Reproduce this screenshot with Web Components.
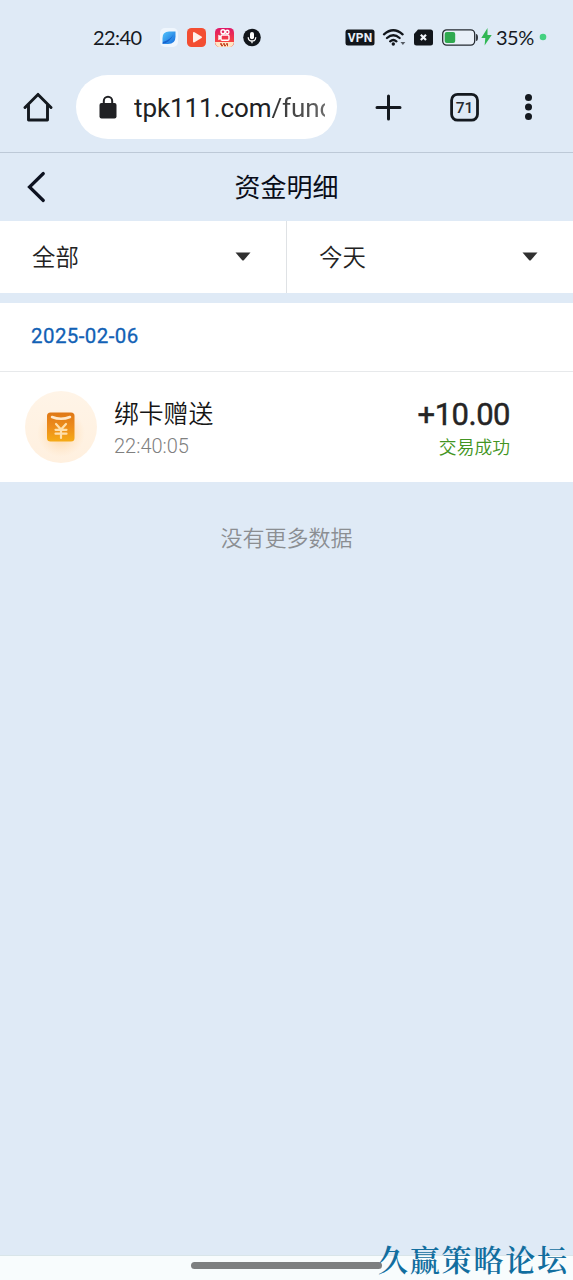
<!DOCTYPE html>
<html lang="zh-CN">
<head>
<meta charset="utf-8">
<title>资金明细</title>
<style>
html,body{margin:0;height:100%}
body{background:#dfeaf6;font-family:Roboto,"Noto Sans CJK SC",sans-serif;overflow:hidden}
</style>
</head>
<body>
<funds-app></funds-app>
<script>
const define=(name,html)=>customElements.define(name,class extends HTMLElement{
  constructor(){
    super();
    const t=document.createElement('template');
    t.innerHTML=html;
    this.attachShadow({mode:'open'}).append(t.content.cloneNode(true));
  }
});

define('status-bar',`<style>
:host{display:flex;height:72px;box-sizing:border-box;padding-top:2px;align-items:center;color:#15191f;font:400 20px/24px Lato,sans-serif;flex:none}
.time{margin-left:93px;width:67px;letter-spacing:-.6px;font-size:20px}
.apps{display:flex;gap:9px;flex:none}
.right{display:flex;align-items:center;margin-left:84px;flex:none}
svg{display:block;flex:none}
.pct{letter-spacing:-.5px;margin-left:4px;width:43px;font-size:20px}
</style>
<span class="time">22:40</span>
<div class="apps">
<svg width="18" height="19" viewBox="0 0 18 19"><defs><linearGradient id="l" x1="0" y1="0" x2="1" y2="1"><stop stop-color="#55c5fb"/><stop offset="1" stop-color="#136bdc"/></linearGradient></defs><rect width="18" height="19" rx="5" fill="#eff6fd"/><path d="M2.500 15.500V10Q2.500 3.500 9 3.500h6.500v5q0 7.500-7.500 7.500H5z" fill="url(#l)"/><path d="M2.500 16q7-1 11-9.500Q10 12 3 14z" fill="#1762cf"/></svg>
<svg width="19" height="19" viewBox="0 0 19 19"><rect width="19" height="19" rx="4.5" fill="#f34e32"/><path d="M6 5.2q0-1.7 1.5-.9l7 4.2q1.3.8 0 1.6l-7 4.2q-1.5.8-1.5-.9z" fill="#fff0e9"/></svg>
<svg width="19" height="19" viewBox="0 0 19 19"><defs><linearGradient id="k" x1="0" y1="0" x2="0" y2="1"><stop stop-color="#df1868"/><stop offset="1" stop-color="#ff5433"/></linearGradient></defs><rect width="19" height="19" rx="4.5" fill="url(#k)"/><g fill="none" stroke="#fff" stroke-width="1.4"><circle cx="8" cy="3.7" r="2"/><circle cx="12.3" cy="4" r="1.7"/><rect x="6" y="7" width="8" height="5.2" rx="1.2"/><path d="M6 9l-2-1v3l2-1"/></g><path d="M0 14h19q-1 5-4.5 5h-10Q1 19 0 14" fill="#ffe6c4"/><path d="M5 16h9M6 17.5h7" stroke="#c54322" stroke-width="1.3" stroke-dasharray="2 1"/></svg>
<svg width="18" height="19" viewBox="0 0 18 19"><circle cx="9" cy="9.5" r="8.8" fill="#12161b"/><rect x="7" y="4" width="4" height="7.2" rx="2" fill="#fff"/><path d="M5.2 9.2q.2 3.8 3.8 3.8t3.8-3.8M9 13v2.3" fill="none" stroke="#fff" stroke-width="1.3"/></svg>
</div>
<div class="right">
<svg width="30" height="17" viewBox="0 0 30 17"><rect x=".5" y=".5" width="29" height="16" rx="2.5" fill="#12161b"/><text x="15" y="12.8" text-anchor="middle" font-family="Roboto" font-weight="700" font-size="12" letter-spacing=".2" fill="#e8eef6">VPN</text></svg>
<svg width="24" height="20" viewBox="0 0 24 20" style="margin-left:7px"><g fill="none" stroke="#12161b" stroke-width="2.3" stroke-linecap="round"><path d="M2 7.3q9.300-8.200 18.600 0M5 11q6.300-5.600 12.600 0M8.200 14.300q3.100-2.600 6.200 0"/></g><circle cx="11.300" cy="17" r="1.700" fill="#12161b"/><path d="M18.500 15h4.800l-2.400 3z" fill="#555b63"/></svg>
<svg width="19" height="17" viewBox="0 0 19 17" style="margin-left:8px"><path d="M4 .5h12.500Q19 .5 19 3v11q0 2.500-2.500 2.500h-14Q0 16.500 0 14V5z" fill="#12161b"/><path d="M6.800 5.800l5.200 5.200m0-5.200l-5.200 5.200" stroke="#f1f5fb" stroke-width="2.200"/></svg>
<svg width="36" height="17" viewBox="0 0 36 17" style="margin-left:9px"><rect x=".7" y=".9" width="32" height="15.200" rx="4" fill="#e9f0f8" stroke="#252a30" stroke-width="1.300"/><rect x="2.700" y="3" width="10.500" height="11" rx="2" fill="#30a94f"/><path d="M34 5q2 0 2 3.500T34 12z" fill="#353a40"/></svg>
<svg width="11" height="18" viewBox="0 0 11 18" style="margin-left:3px"><path d="M6.500 0L.3 10h4L3.600 17.500 10.700 7H6.500z" fill="#31b755"/></svg>
<span class="pct">35%</span>
<svg width="8" height="8" viewBox="0 0 8 8"><circle cx="4" cy="4" r="3.300" fill="#44d180"/></svg>
</div>`);

define('browser-bar',`<style>
:host{display:flex;align-items:center;height:81px;box-sizing:border-box;padding-bottom:10px;border-bottom:1px solid #bdc9d7;flex:none}
svg{display:block;flex:none}
.home{margin-left:23px}
.url{display:flex;align-items:center;width:261px;height:64px;border-radius:32px;background:#fff;margin-left:23px;flex:none}
.lock{margin-left:23px}
.address{margin-left:17px;width:191px;overflow:hidden;white-space:nowrap;font:400 26px/38px Roboto,sans-serif;letter-spacing:-.08px;color:#202124;padding-top:2px}
.path{background:linear-gradient(90deg,#333 0,#555 40px,#777 60px);-webkit-background-clip:text;background-clip:text;color:transparent}
</style>
<svg class="home" width="30" height="30" viewBox="0 0 30 30"><path d="M2 15.500L15 2.400l13 13.100M5.500 13v15h19V13" fill="none" stroke="#14191f" stroke-width="2.900" stroke-linecap="round" stroke-linejoin="round"/></svg>
<div class="url">
<svg class="lock" width="18" height="24" viewBox="0 0 18 24"><rect x=".5" y="8" width="17" height="15.500" rx="2" fill="#202124"/><path d="M4.800 9V6a4.200 4.200 0 018.400 0v3" fill="none" stroke="#202124" stroke-width="2"/></svg>
<div class="address">tpk111.com<span class="path">/func</span></div>
</div>
<svg style="margin-left:38px" width="27" height="27" viewBox="0 0 27 27"><path d="M13.500 2v23M2 13.500h23" stroke="#14191f" stroke-width="3" stroke-linecap="round"/></svg>
<svg style="margin-left:47px" width="30" height="30" viewBox="0 0 30 30"><rect x="2.600" y="2.300" width="25.900" height="25.900" rx="6" fill="none" stroke="#14191f" stroke-width="2.800"/><text x="15.500" y="20.600" text-anchor="middle" font-family="Roboto" font-size="15.500" font-weight="500" fill="#252a31">71</text></svg>
<svg style="margin-left:45px" width="10" height="28" viewBox="0 0 10 28"><g fill="#14191f"><circle cx="4.500" cy="4.500" r="3.500"/><circle cx="4.500" cy="14" r="3.500"/><circle cx="4.500" cy="23.500" r="3.500"/></g></svg>`);

define('page-header',`<style>
:host{display:grid;grid-template-columns:60px 1fr 60px;align-items:center;height:68px;flex:none}
svg{display:block;margin-left:26px}
h1{margin:0 0 2px;text-align:center;font:400 26px/36px "Noto Sans CJK SC",sans-serif;color:#090d18}
</style>
<svg width="20" height="32" viewBox="0 0 20 32"><path d="M17.300 2.500L3.500 16l13.800 13.500" fill="none" stroke="#0d1220" stroke-width="3.200" stroke-linecap="round"/></svg>
<h1><slot></slot></h1>`);

define('filter-select',`<style>
:host{display:flex;justify-content:space-between;align-items:center;flex:1;box-sizing:border-box;height:72px;padding:0 35px 2px 32px;background:#fff;font:350 23.4px/34px "Noto Sans CJK SC",sans-serif;color:#222}
:host(:first-child){border-right:1px solid #dfe2e5}
svg{display:block}
</style><span><slot></slot></span><svg width="16" height="9" viewBox="0 0 16 9"><path d="M.5.5h15L9 8q-1 1-2 0z" fill="#303030"/></svg>`);

define('filter-row',`<style>:host{display:flex;flex:none;margin-bottom:10px}</style><slot></slot>`);

define('date-heading',`<style>
:host{display:flex;align-items:center;box-sizing:border-box;flex:none;height:69px;padding:0 0 2px 31px;background:#fff;border-bottom:1px solid #e7e9eb;color:#1261b5;font:400 20.5px/30px Roboto,sans-serif;letter-spacing:.42px;-webkit-text-stroke:.3px #1261b5}
</style><slot></slot>`);

define('transaction-row',`<style>
:host{display:flex;align-items:center;box-sizing:border-box;flex:none;height:110px;padding:0 63px 0 25px;background:#fff}
.icon{width:72px;height:72px;flex:none;margin-right:17px}
.info{display:flex;flex-direction:column;flex:1}
.name{font:350 24.8px/34px "Noto Sans CJK SC",sans-serif;color:#151515}
.time{font:300 20px/26px Roboto,sans-serif;color:#808080;letter-spacing:0;margin-top:4px}
.result{text-align:right;padding-top:2px}
.amount{font:400 31px/34px Roboto,sans-serif;color:#252525;letter-spacing:-.5px;-webkit-text-stroke:.45px #252525}
.status{font:350 17.800px/26px "Noto Sans CJK SC",sans-serif;color:#439523;margin-top:1px}
</style>
<svg class="icon" viewBox="0 0 72 72"><defs><linearGradient id="bg" x1="0" y1="0" x2="0" y2="1"><stop stop-color="#fff4e7"/><stop offset="1" stop-color="#fff0df"/></linearGradient><radialGradient id="glow"><stop stop-color="#ffc47c" stop-opacity=".75"/><stop offset="1" stop-color="#ffd8a8" stop-opacity="0"/></radialGradient><linearGradient id="wallet" x1="0" y1="0" x2="0" y2="1"><stop stop-color="#df7816"/><stop offset=".5" stop-color="#ed8c1b"/><stop offset="1" stop-color="#f5ab16"/></linearGradient></defs><circle cx="36" cy="36" r="36" fill="url(#bg)"/><circle cx="36" cy="42" r="24" fill="url(#glow)"/><rect x="22" y="21.500" width="27.500" height="29" rx="3.500" fill="url(#wallet)"/><path d="M27 26q9 3.700 18 0" fill="none" stroke="#ffe8c9" stroke-width="2.500" stroke-linecap="round"/><path d="M31 33l5 5.500 5-5.500M36 38v9M30.500 38.800h11M30.500 42.700h11" fill="none" stroke="#ffdfaa" stroke-width="2.200" stroke-linecap="round"/></svg>
<div class="info"><span class="name"><slot name="name"></slot></span><span class="time"><slot name="time"></slot></span></div>
<div class="result"><div class="amount"><slot name="amount"></slot></div><div class="status"><slot name="status"></slot></div></div>`);

define('end-note',`<style>:host{display:block;flex:none;padding-top:38px;text-align:center;font:350 22px/32px "Noto Sans CJK SC",sans-serif;color:#8b8e92}</style><slot></slot>`);

define('bottom-bar',`<style>
:host{display:block;position:relative;margin-top:auto;height:24px;background:#f8fcfd;border-top:1px solid #d9e5e9;flex:none}
.handle{width:191px;height:7px;border-radius:4px;background:#7d7f80;margin:6px auto 0}
.mark{position:absolute;right:6px;bottom:3px;font:600 30px/38px "AR PL UKai CN","KaiTi","Noto Serif CJK SC","Noto Sans CJK SC",serif;letter-spacing:1.800px;margin-right:-1.800px;color:#126e9f;white-space:nowrap}
</style><div class="handle"></div><span class="mark"><slot></slot></span>`);

define('funds-app',`<style>:host{display:flex;flex-direction:column;width:573px;height:1280px;background:#dfeaf6;overflow:hidden}</style>
<status-bar></status-bar><browser-bar></browser-bar>
<page-header>资金明细</page-header>
<filter-row><filter-select>全部</filter-select><filter-select>今天</filter-select></filter-row>
<date-heading>2025-02-06</date-heading>
<transaction-row><span slot="name">绑卡赠送</span><span slot="time">22:40:05</span><span slot="amount">+10.00</span><span slot="status">交易成功</span></transaction-row>
<end-note>没有更多数据</end-note>
<bottom-bar>久赢策略论坛</bottom-bar>`);
</script>
</body>
</html>
